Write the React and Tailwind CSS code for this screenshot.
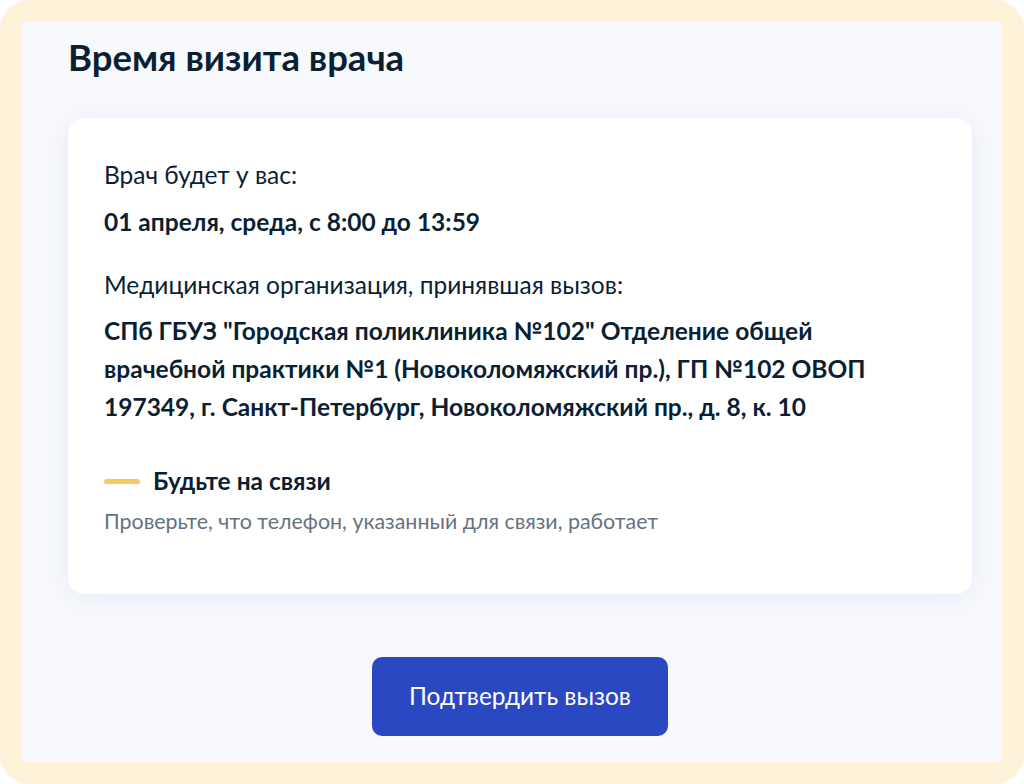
import React from "react";

const App = () => {
  return (
    <div
      className="w-[1024px] h-[784px] bg-white"
      style={{ fontFamily: "Lato, 'Noto Sans', sans-serif" }}
    >
      {/* Outer yellow frame */}
      <div className="w-full h-full bg-[#fef3d9] rounded-[30px] p-[22px]">
        <div className="w-full h-full bg-[#f8f9fd] pl-[46px] pt-[11px]">
          <div className="w-[904px] flex flex-col">
            <h1 className="text-[36.5px] leading-[48px] font-bold text-[#0b1f33]">
              Время визита врача
            </h1>

            {/* Info card */}
            <div className="mt-[37px] bg-white rounded-[16px] shadow-[0_4px_24px_rgba(30,60,160,0.08)] px-[36px] pt-[42px] pb-[59px] text-[#0b1f33]">
              <p className="text-[24.5px] leading-[30px]">Врач будет у вас:</p>
              <p className="mt-[17px] text-[24.5px] leading-[30px] font-bold">
                01 апреля, среда, с 8:00 до 13:59
              </p>
              <p className="mt-[33px] text-[24.5px] leading-[30px]">
                Медицинская организация, принявшая вызов:
              </p>
              <p className="mt-[12px] text-[24.5px] leading-[38px] font-bold">
                СПб ГБУЗ "Городская поликлиника №102" Отделение общей
                <br />
                врачебной практики №1 (Новоколомяжский пр.), ГП №102 ОВОП
                <br />
                197349, г. Санкт-Петербург, Новоколомяжский пр., д. 8, к. 10
              </p>

              <div className="mt-[40px] flex items-center">
                <span className="w-[36px] h-[5px] rounded-full bg-[#f5cc5c]" />
                <span className="ml-[13px] text-[24.5px] leading-[30px] font-bold">
                  Будьте на связи
                </span>
              </div>
              <p className="mt-[11px] text-[21.4px] leading-[28px] text-[#66727f]">
                Проверьте, что телефон, указанный для связи, работает
              </p>
            </div>

            {/* Confirm button */}
            <div className="mt-[63px] flex justify-center">
              <button className="w-[296px] h-[79px] rounded-[10px] bg-[#2b48c3] text-white text-[24.4px]">
                Подтвердить вызов
              </button>
            </div>
          </div>
        </div>
      </div>
    </div>
  );
};

export default App;
